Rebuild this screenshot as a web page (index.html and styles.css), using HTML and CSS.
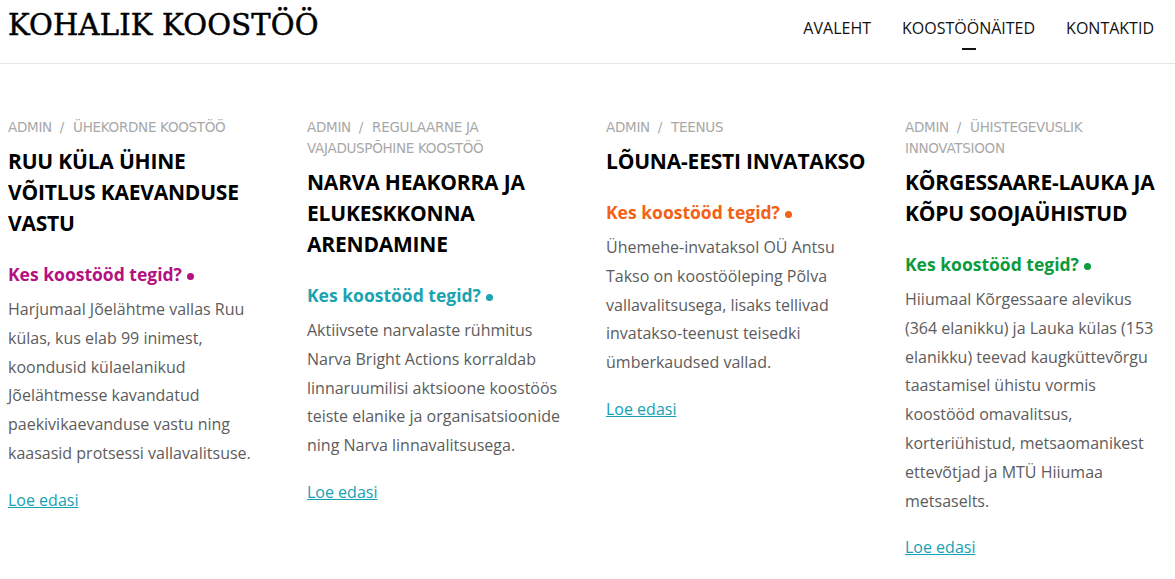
FILE: index.html
```html
<!DOCTYPE html>
<html lang="et">
<head>
    <meta charset="UTF-8">
    <meta name="viewport" content="width=device-width, initial-scale=1.0">
    <title>Kohalik koostöö | Koostöönäited</title>
    <link rel="stylesheet" href="styles.css">
</head>
<body>
    <header class="site-header">
        <a class="logo" href="#">KOHALIK KOOSTÖÖ</a>
        <nav class="main-nav">
            <a href="#">AVALEHT</a>
            <a href="#" class="active">KOOSTÖÖNÄITED</a>
            <a href="#">KONTAKTID</a>
        </nav>
    </header>

    <main class="posts">
        <article class="post">
            <div class="post-meta">ADMIN<span class="sep">/</span>ÜHEKORDNE KOOSTÖÖ</div>
            <h2 class="post-title">RUU KÜLA ÜHINE VÕITLUS KAEVANDUSE VASTU</h2>
            <h3 class="who who-magenta">Kes koostööd tegid? <span class="dot"></span></h3>
            <p class="excerpt">Harjumaal Jõelähtme vallas Ruu külas, kus elab 99 inimest, koondusid külaelanikud Jõelähtmesse kavandatud paekivikaevanduse vastu ning kaasasid protsessi vallavalitsuse.</p>
            <a class="read-more" href="#">Loe edasi</a>
        </article>

        <article class="post">
            <div class="post-meta">ADMIN<span class="sep">/</span>REGULAARNE JA VAJADUSPÕHINE KOOSTÖÖ</div>
            <h2 class="post-title">NARVA HEAKORRA JA ELUKESKKONNA ARENDAMINE</h2>
            <h3 class="who who-teal">Kes koostööd tegid? <span class="dot"></span></h3>
            <p class="excerpt">Aktiivsete narvalaste rühmitus Narva Bright Actions korraldab linnaruumilisi aktsioone koostöös teiste elanike ja organisatsioonide ning Narva linnavalitsusega.</p>
            <a class="read-more" href="#">Loe edasi</a>
        </article>

        <article class="post">
            <div class="post-meta">ADMIN<span class="sep">/</span>TEENUS</div>
            <h2 class="post-title">LÕUNA-EESTI INVATAKSO</h2>
            <h3 class="who who-orange">Kes koostööd tegid? <span class="dot"></span></h3>
            <p class="excerpt">Ühemehe-invataksol OÜ Antsu Takso on koostööleping Põlva vallavalitsusega, lisaks tellivad invatakso-teenust teisedki ümberkaudsed vallad.</p>
            <a class="read-more" href="#">Loe edasi</a>
        </article>

        <article class="post">
            <div class="post-meta">ADMIN<span class="sep">/</span>ÜHISTEGEVUSLIK INNOVATSIOON</div>
            <h2 class="post-title">KÕRGESSAARE-LAUKA JA KÕPU SOOJAÜHISTUD</h2>
            <h3 class="who who-green">Kes koostööd tegid? <span class="dot"></span></h3>
            <p class="excerpt">Hiiumaal Kõrgessaare alevikus (364 elanikku) ja Lauka külas (153 elanikku) teevad kaugküttevõrgu taastamisel ühistu vormis koostööd omavalitsus, korteriühistud, metsaomanikest ettevõtjad ja MTÜ Hiiumaa metsaselts.</p>
            <a class="read-more" href="#">Loe edasi</a>
        </article>
    </main>
</body>
</html>
```

FILE: styles.css
```css
:root {
    --text: #111;
    --body: #5c5c5c;
    --meta: #a8a8a8;
    --link: #18a0b4;
    --border: #e6e6e6;
}

* {
    margin: 0;
    padding: 0;
    box-sizing: border-box;
}

body {
    font-family: 'Open Sans', sans-serif;
    color: var(--text);
    background: #fff;
}

a {
    text-decoration: none;
    color: inherit;
}

/* header */
.site-header {
    height: 64px;
    border-bottom: 1px solid var(--border);
    display: flex;
    align-items: flex-start;
    justify-content: space-between;
    padding: 0 21px 0 8px;
}

.logo {
    font-family: 'DejaVu Serif', serif;
    font-size: 29px;
    line-height: 50px;
    letter-spacing: 0.2px;
    color: #000;
    -webkit-text-stroke: 0.5px #000;
}

.main-nav {
    display: flex;
    gap: 31px;
    padding-top: 16px;
}

.main-nav a {
    font-size: 16px;
    line-height: 24px;
    color: #111;
    position: relative;
}

.main-nav a.active::after {
    content: "";
    position: absolute;
    left: 50%;
    top: 32px;
    width: 14px;
    height: 2px;
    margin-left: -7px;
    background: #111;
}

/* posts */
.posts {
    display: grid;
    grid-template-columns: repeat(4, 262px);
    column-gap: 37px;
    padding: 53px 0 0 8px;
    align-items: start;
}

.post-meta {
    font-family: 'DejaVu Sans', sans-serif;
    font-size: 13.5px;
    line-height: 21px;
    color: var(--meta);
    letter-spacing: -0.3px;
    margin-bottom: 8px;
}

.post-meta .sep {
    margin: 0 9px 0 8px;
}

.post-title {
    font-size: 21px;
    font-weight: 700;
    line-height: 31px;
    letter-spacing: -0.2px;
    color: #000;
    margin-bottom: 22px;
}

.who {
    font-size: 17.5px;
    font-weight: 700;
    line-height: 26px;
    margin-bottom: 8px;
}

.who .dot {
    display: inline-block;
    width: 7px;
    height: 7px;
    border-radius: 50%;
    background: currentColor;
    vertical-align: middle;
    margin-left: 1px;
}

.who-magenta { color: #b4107f; }
.who-teal { color: #1aa3b0; }
.who-orange { color: #f26115; }
.who-green { color: #0b9b3d; }

.excerpt {
    font-size: 16px;
    line-height: 28.8px;
    color: var(--body);
    margin-bottom: 18px;
    padding-right: 6px;
}

.read-more {
    font-size: 16px;
    line-height: 28.8px;
    color: var(--link);
    text-decoration: underline;
}
```
